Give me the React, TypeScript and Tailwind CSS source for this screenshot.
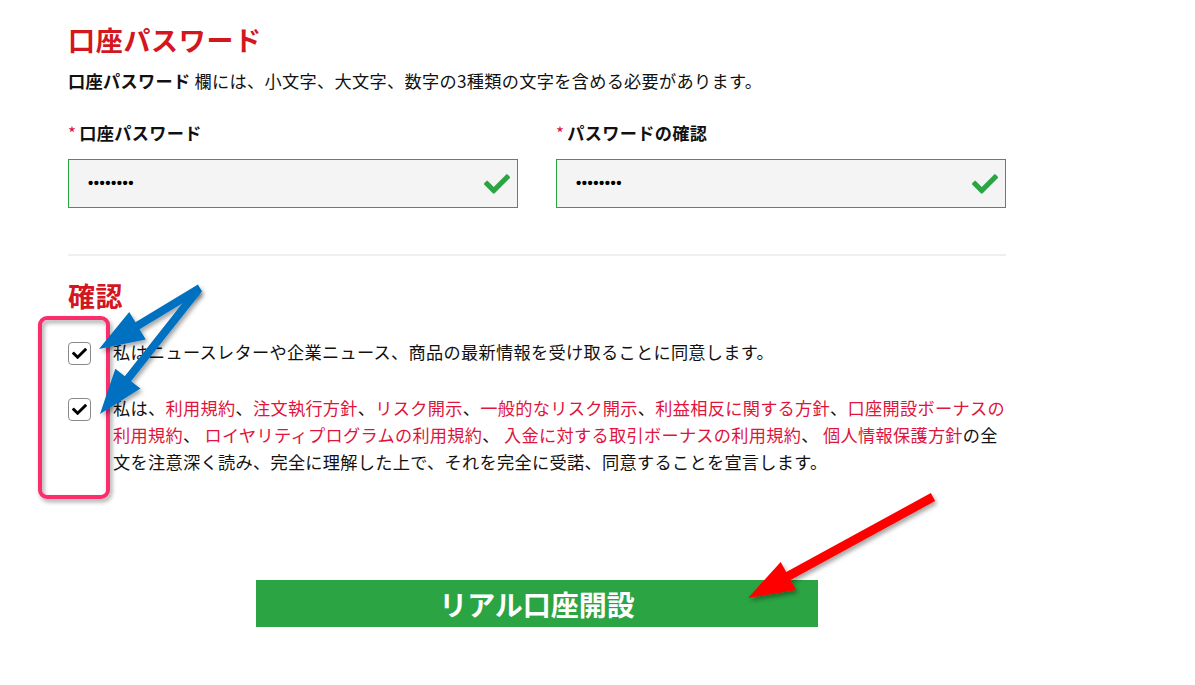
import { FaCheck } from "react-icons/fa"

type Pt = [number, number]

// builds a filled arrow outline from tail to tip
function arrowPoints(tail: Pt, tip: Pt, shaft: number, headLen: number, headW: number) {
  const dx = tip[0] - tail[0]
  const dy = tip[1] - tail[1]
  const len = Math.hypot(dx, dy)
  const ux = dx / len
  const uy = dy / len
  const nx = -uy
  const ny = ux
  const bx = tip[0] - ux * headLen
  const by = tip[1] - uy * headLen
  const pts: Pt[] = [
    [tail[0] + (nx * shaft) / 2, tail[1] + (ny * shaft) / 2],
    [bx + (nx * shaft) / 2, by + (ny * shaft) / 2],
    [bx + (nx * headW) / 2, by + (ny * headW) / 2],
    tip,
    [bx - (nx * headW) / 2, by - (ny * headW) / 2],
    [bx - (nx * shaft) / 2, by - (ny * shaft) / 2],
    [tail[0] - (nx * shaft) / 2, tail[1] - (ny * shaft) / 2],
  ]
  return pts.map((p) => p.join(",")).join(" ")
}

function Annotations() {
  return (
    <svg
      className="absolute left-0 top-0 pointer-events-none"
      width={1195}
      height={685}
      viewBox="0 0 1195 685"
    >
      <defs>
        <filter id="shadow" x="-20%" y="-20%" width="140%" height="140%">
          <feDropShadow dx="2" dy="3" stdDeviation="2" floodColor="#000" floodOpacity="0.35" />
        </filter>
      </defs>
      <rect
        x={40}
        y={318}
        width={68}
        height={179}
        rx={7}
        fill="none"
        stroke="#fb2f6c"
        strokeWidth={4}
        filter="url(#shadow)"
      />
      <polygon
        points={arrowPoints([200, 288], [99, 349], 8, 45, 32)}
        fill="#0070c0"
        filter="url(#shadow)"
      />
      <polygon
        points={arrowPoints([198, 290], [100, 414], 8, 45, 32)}
        fill="#0070c0"
        filter="url(#shadow)"
      />
      <polygon
        points={arrowPoints([933, 497], [748, 598], 9, 46, 32)}
        fill="#ff0000"
        filter="url(#shadow)"
      />
    </svg>
  )
}

function PasswordField({ label }: { label: string }) {
  return (
    <div>
      <div className="flex items-center text-[17.2px] leading-[27px] font-bold tracking-[0.3px] text-[#111]">
        <span className="text-[#e0143c] font-normal text-[17px] mr-[3px]">*</span>
        {label}
      </div>
      <div className="mt-[13px] h-[49px] bg-[#f4f4f4] border border-[#2ba443] flex items-center justify-between pl-[19px] pr-[7px]">
        <span className="text-[15px] font-bold tracking-[0.5px] text-black font-['Liberation_Sans',sans-serif]">
          ••••••••
        </span>
        <FaCheck className="text-[#2ba443] w-[26px] h-[26px]" />
      </div>
    </div>
  )
}

function Checkbox() {
  return (
    <div className="w-[23px] h-[23px] shrink-0 rounded-[4px] border border-[#8a8a8a] bg-white flex items-center justify-center mt-[4px]">
      <FaCheck className="w-[15px] h-[15px] text-black" />
    </div>
  )
}

const link = "text-[#e0143c]"

export default function App() {
  return (
    <div className="relative w-[1195px] h-[685px] bg-white overflow-hidden font-['Noto_Sans_CJK_JP',sans-serif] text-[#111]">
      <div className="pl-[68px] pt-[22px] w-[1006px]">
        <h1 className="text-[27px] leading-[36px] font-bold tracking-[0.7px] text-[#d4161f]">口座パスワード</h1>
        <p className="mt-[9px] text-[17.2px] leading-[27px] tracking-[0.3px]">
          <span className="font-bold">口座パスワード</span> 欄には、小文字、大文字、数字の3種類の文字を含める必要があります。
        </p>

        <div className="mt-[25px] grid grid-cols-2 gap-[38px]">
          <PasswordField label="口座パスワード" />
          <PasswordField label="パスワードの確認" />
        </div>

        <div className="mt-[46px] border-t-2 border-[#efefef]" />

        <h2 className="mt-[22px] text-[27px] leading-[36px] font-bold tracking-[0.5px] text-[#d4161f]">確認</h2>

        <div className="mt-[24px] flex gap-[22px]">
          <Checkbox />
          <p className="text-[17.2px] leading-[27px] tracking-[0.3px] whitespace-nowrap">
            私はニュースレターや企業ニュース、商品の最新情報を受け取ることに同意します。
          </p>
        </div>

        <div className="mt-[29px] flex gap-[22px]">
          <Checkbox />
          <p className="text-[17.2px] leading-[27px] tracking-[0.3px] whitespace-nowrap">
            私は、<span className={link}>利用規約</span>、<span className={link}>注文執行方針</span>、
            <span className={link}>リスク開示</span>、<span className={link}>一般的なリスク開示</span>、
            <span className={link}>利益相反に関する方針</span>、<span className={link}>口座開設ボーナスの</span>
            <br />
            <span className={link}>利用規約</span>、 <span className={link}>ロイヤリティプログラムの利用規約</span>、{" "}
            <span className={link}>入金に対する取引ボーナスの利用規約</span>、{" "}
            <span className={link}>個人情報保護方針</span>の全
            <br />
            文を注意深く読み、完全に理解した上で、それを完全に受諾、同意することを宣言します。
          </p>
        </div>

        <button className="mt-[105px] ml-[188px] w-[562px] h-[47px] bg-[#2ba443] text-white text-[28px] font-bold flex items-center justify-center">
          リアル口座開設
        </button>
      </div>

      <Annotations />
    </div>
  )
}
